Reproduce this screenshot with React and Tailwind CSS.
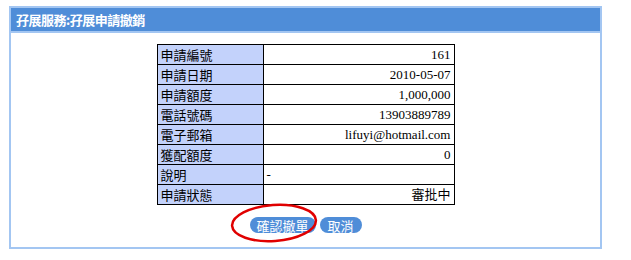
const rows = [
  ['申請編號', '161'],
  ['申請日期', '2010-05-07'],
  ['申請額度', '1,000,000'],
  ['電話號碼', '13903889789'],
  ['電子郵箱', 'lifuyi@hotmail.com'],
  ['獲配額度', '0'],
  ['說明', '-', 'left'],
  ['申請狀態', '審批中'],
];

const App = () => {
  return (
    <div className="w-[631px] h-[260px] bg-white pt-[6px] pl-[9px]">
      <div className="w-[593px] h-[243px] border-2 border-[#a3c6f2] flex flex-col">
        {/* header bar */}
        <div className="h-[25px] bg-[#4f8dd8] border-b-2 border-[#a3c6f2] flex items-center px-[5px] text-white text-[13px] font-bold font-['Noto_Sans_CJK_TC',sans-serif] tracking-[-0.5px]">
          孖展服務:孖展申請撤銷
        </div>

        <div className="flex flex-col items-center pt-[11px]">
          <table className="border-collapse w-[298px] text-[13px] leading-none">
            <tbody>
              {rows.map(([label, value, align]) => (
                <tr key={label} className="h-[20px]">
                  <td className="w-[106px] border border-black bg-[#c3d2fb] px-[3px] font-['Noto_Sans_CJK_TC',sans-serif] text-black">
                    {label}
                  </td>
                  <td
                    className={
                      align === 'left'
                        ? "border border-black px-[3px] text-left font-['Liberation_Serif','Noto_Sans_CJK_TC',serif] text-black"
                        : "border border-black px-[3px] text-right font-['Liberation_Serif','Noto_Sans_CJK_TC',serif] text-black"
                    }
                  >
                    {value}
                  </td>
                </tr>
              ))}
            </tbody>
          </table>

          <div className="relative flex gap-[4px] mt-[12px]">
            <button className="w-[66px] h-[16px] rounded-full bg-[#4f8dd8] text-white text-[13px] leading-none font-['Noto_Sans_CJK_TC',sans-serif] flex items-center justify-center">
              確認撤單
            </button>
            <button className="w-[42px] h-[16px] rounded-full bg-[#4f8dd8] text-white text-[13px] leading-none font-['Noto_Sans_CJK_TC',sans-serif] flex items-center justify-center">
              取消
            </button>
            {/* hand drawn red circle */}
            <svg className="absolute left-[-20px] top-[-14px] pointer-events-none" width="90" height="42" viewBox="0 0 90 42">
              <ellipse cx="44" cy="20" rx="42" ry="18" fill="none" stroke="#e00000" strokeWidth="2.5" transform="rotate(-4 44 20)" />
            </svg>
          </div>
        </div>
      </div>
    </div>
  );
};

export default App;
